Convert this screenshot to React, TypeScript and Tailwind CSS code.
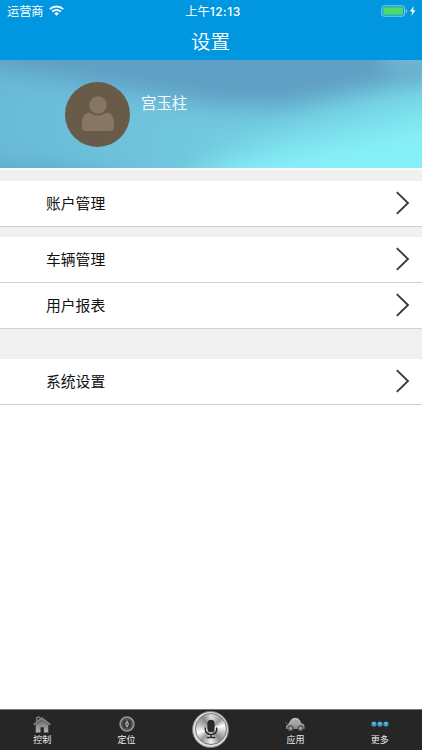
import React from "react";

function Chevron() {
  return (
    <svg className="mr-[11px] shrink-0" width="16" height="24" viewBox="0 0 16 24" fill="none">
      <path d="M1.8 1.2 13 12 1.8 22.8" stroke="#34343a" strokeWidth="1.8" />
    </svg>
  );
}

function Row({ label }: { label: string }) {
  return (
    <div className="flex h-[46px] items-center justify-between border-b border-[#cfcfcf] bg-white pb-[0.5px] pl-[46px]">
      <span className="-mt-[1px] text-[14.8px] leading-5 text-[#111]">{label}</span>
      <Chevron />
    </div>
  );
}

function StatusBar() {
  return (
    <div className="flex h-[22px] items-center">
      <div className="flex flex-1 items-center pl-[7px]">
        <span className="text-[12.2px] leading-4">运营商</span>
        <svg className="-mt-px ml-[5.5px]" width="15" height="11" viewBox="0 0 15 11" fill="none" stroke="#fff">
          <path d="M.9 4.1a9.4 9.4 0 0 1 13.2 0" strokeWidth="2" />
          <path d="M3.2 6.6a6.1 6.1 0 0 1 8.6 0" strokeWidth="1.8" />
          <path d="M5.2 8.4a3.3 3.3 0 0 1 4.6 0L7.5 10.8Z" fill="#fff" stroke="none" />
        </svg>
      </div>
      <span className="ml-[2px] text-[12.2px] leading-4">
        上午<span className="font-['Inter'] text-[12px] font-medium tracking-[0.5px]">12:13</span>
      </span>
      <div className="flex flex-1 items-center justify-end pr-[5px]">
        <svg className="-mt-px" width="36" height="12" viewBox="0 0 36 12">
          <rect x=".8" y=".8" width="22.8" height="10.4" rx="2.4" fill="none" stroke="#8ccbed" />
          <rect x="2.2" y="2.2" width="20" height="7.6" rx="1" fill="#4cd964" />
          <path d="M24.8 4v4q1.4-.5 1.4-2t-1.4-2" fill="#8ccbed" />
          <path d="m32.8 1-4 5.6h2.5l-1 4.4 4.2-5.8H32Z" fill="#fff" />
        </svg>
      </div>
    </div>
  );
}

function Banner() {
  return (
    <section className="relative flex h-[108px] overflow-hidden">
      <svg className="absolute inset-0" width="422" height="108" preserveAspectRatio="none" viewBox="0 0 422 108">
        <defs>
          <linearGradient id="base" x1="0" x2="1">
            <stop offset="0" stopColor="#69bad7" />
            <stop offset=".4" stopColor="#70c6dd" />
            <stop offset="1" stopColor="#77d8e7" />
          </linearGradient>
          <filter id="soft" filterUnits="userSpaceOnUse" x="-100" y="-120" width="640" height="350" colorInterpolationFilters="sRGB">
            <feGaussianBlur stdDeviation="17" />
          </filter>
          <filter id="softSmall" filterUnits="userSpaceOnUse" x="-100" y="-120" width="640" height="350" colorInterpolationFilters="sRGB">
            <feGaussianBlur stdDeviation="11" />
          </filter>
        </defs>
        <rect width="422" height="108" fill="url(#base)" />
        <path d="M160 160 215 105 275 86 350 72 490 45V180Z" fill="#86f0f7" filter="url(#soft)" />
        <path d="M-40-50H490V16L400 24 335 37 280 48 220 46 160 36 90 24-40 2Z" fill="#5f9fc4" filter="url(#softSmall)" />
        <path d="M-40 108 50 108 120 120V150H-40Z" fill="#5aa5c9" filter="url(#softSmall)" />
        <path d="M360-40H490V20L390 12Z" fill="#77c0d8" opacity=".75" filter="url(#softSmall)" />
      </svg>
      <div className="relative ml-[65px] mt-[22px] flex size-[65px] items-center justify-center rounded-full bg-[#695b4a]">
        <svg width="65" height="65" viewBox="0 0 65 65" fill="#877662">
          <circle cx="33" cy="23" r="8.7" />
          <path d="M24.2 30.5Q33 36.5 41.8 30.5C46 31 49 35 49 40V45Q49 49 45 49H21Q17 49 17 45V40C17 35 20 31 24.2 30.5Z" />
        </svg>
      </div>
      <span className="relative ml-[11px] mt-[30px] text-[15.4px] font-[350] leading-6 text-white">宫玉柱</span>
    </section>
  );
}

function HomeIcon() {
  return (
    <svg width="18" height="17" viewBox="0 0 18 17">
      <defs>
        <linearGradient id="home" x2="0" y2="1">
          <stop stopColor="#666" />
          <stop offset="1" stopColor="#b4b4b4" />
        </linearGradient>
      </defs>
      <path d="M2.7 9 9 3.5 15.3 9V16.5H10.8v-5.3H7.5v5.3H2.7Z" fill="url(#home)" />
      <path d="m.8 8.7 8-6.5 8.4 6.5" fill="none" stroke="#858585" strokeWidth="1.8" />
      <path d="M3.7 5.5V2L5.3 1l2 .7" fill="none" stroke="#777" strokeWidth="1.6" />
    </svg>
  );
}

function LocateIcon() {
  return (
    <svg width="16" height="16" viewBox="0 0 16 16" fill="none">
      <circle cx="8" cy="8" r="6.8" fill="#444" stroke="#929292" strokeWidth="1.8" />
      <circle cx="8" cy="8" r="4.6" fill="#333" stroke="#555" strokeWidth="1" />
      <path d="m8 3.7 2.1 4.5L8 12 5.9 8.2Z" fill="#aaa" />
      <circle cx="8" cy="8.2" r=".8" fill="#292929" />
    </svg>
  );
}

function CarIcon() {
  return (
    <svg width="20" height="15" viewBox="0 0 20 15">
      <defs>
        <linearGradient id="car" x2="0" y2="1">
          <stop stopColor="#c8c8c8" />
          <stop offset="1" stopColor="#858585" />
        </linearGradient>
      </defs>
      <path d="M1 12V9L3 7.2 5.8 3Q7.5.7 10.5.7T15 3.5L16.3 6.3Q19.5 6.8 19.5 9.5V12H2Z" fill="url(#car)" />
      <path d="M.7 5.2 2 6.6M7 6.2 8.5 3h2v3.2m1.2 0V3l2.4 3.2" fill="none" stroke="#999" strokeWidth=".8" />
      <circle cx="5.5" cy="11.2" r="2.8" fill="#666" stroke="#444" strokeWidth=".6" />
      <circle cx="15.5" cy="11.2" r="2.8" fill="#666" stroke="#444" strokeWidth=".6" />
      <circle cx="5.5" cy="11.2" r="1.2" fill="#aaa" />
      <circle cx="15.5" cy="11.2" r="1.2" fill="#aaa" />
    </svg>
  );
}

function MoreIcon() {
  return (
    <svg width="18" height="6" viewBox="0 0 18 6">
      <g fill="#3b9ac8">
        <circle cx="3" cy="3" r="2.6" />
        <circle cx="9" cy="3" r="2.6" />
        <circle cx="15" cy="3" r="2.6" />
      </g>
      <g fill="#79c8e8">
        <circle cx="2.6" cy="2.2" r="1" />
        <circle cx="8.6" cy="2.2" r="1" />
        <circle cx="14.6" cy="2.2" r="1" />
      </g>
    </svg>
  );
}

function Tab({ label, children }: { label: string; children: React.ReactNode }) {
  return (
    <div className="flex flex-col items-center">
      <div className="mt-[5px] flex h-[18px] items-center">{children}</div>
      <span className="text-[9px] leading-[13px] text-[#eee]">{label}</span>
    </div>
  );
}

function MicButton() {
  return (
    <div className="-mt-[2px] flex size-[37px] items-center justify-center self-center justify-self-center rounded-full border border-[#777] bg-[#ddd] p-[1.5px]">
      <div className="flex size-full items-center justify-center rounded-full border border-[#777] bg-[conic-gradient(#ddd,#999_45deg,#fff_75deg,#bbb_110deg,#888_140deg,#eee_180deg,#999_220deg,#fff_255deg,#bbb_290deg,#888_325deg,#ddd)]">
        <svg width="14" height="20" viewBox="0 0 14 20" fill="none">
          <rect x="3.4" y=".8" width="7.2" height="12.5" rx="3.6" fill="#292929" />
          <path d="M1.3 8.5v2.2a5.7 4.8 0 0 0 11.4 0V8.5M7 15.5v3M2.7 18.5h8.6" stroke="#292929" strokeWidth="1.5" />
        </svg>
      </div>
    </div>
  );
}

export default function App() {
  return (
    <div className="flex h-[750px] w-[422px] flex-col overflow-hidden bg-white font-['Noto_Sans_CJK_SC',sans-serif]">
      <header className="h-[60px] bg-[#0097e0] text-white">
        <StatusBar />
        <h1 className="-ml-[1px] text-center text-[19.5px] font-[350] leading-[38px]">设置</h1>
      </header>
      <Banner />
      <main className="flex-1">
        <div className="h-[13px] border-t-2 border-[#f9fdfd] bg-[#f0f0f0]" />
        <Row label="账户管理" />
        <div className="h-[10px] bg-[#f0f0f0]" />
        <Row label="车辆管理" />
        <Row label="用户报表" />
        <div className="h-[30px] bg-[#f0f0f0]" />
        <Row label="系统设置" />
      </main>
      <nav className="grid h-[41px] grid-cols-5 border-t border-[#777] bg-[#262626]">
        <Tab label="控制"><HomeIcon /></Tab>
        <Tab label="定位"><LocateIcon /></Tab>
        <MicButton />
        <Tab label="应用"><CarIcon /></Tab>
        <Tab label="更多"><MoreIcon /></Tab>
      </nav>
    </div>
  );
}
